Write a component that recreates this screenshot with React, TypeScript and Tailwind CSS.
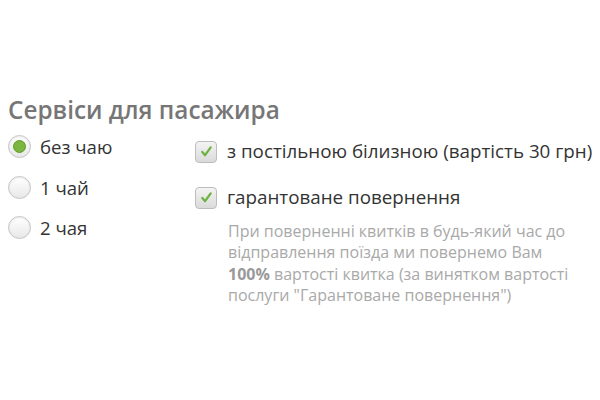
// Passenger services block - tea choice radios and extra service checkboxes

const teaOptions = [
  { id: 'none', label: 'без чаю', checked: true },
  { id: 'one', label: '1 чай', checked: false },
  { id: 'two', label: '2 чая', checked: false },
];

function Radio({ checked }: { checked: boolean }) {
  return (
    <span className="flex h-[23px] w-[23px] shrink-0 items-center justify-center rounded-full border border-[#c4c4c4] bg-gradient-to-b from-[#ffffff] to-[#e8e8e8] shadow-[inset_0_1px_2px_rgba(0,0,0,0.08)]">
      {checked && (
        <span className="h-[13px] w-[13px] rounded-full border border-[#5f9a2a] bg-[#7ab640]" />
      )}
    </span>
  );
}

function Checkbox() {
  return (
    <span className="flex h-[22px] w-[22px] shrink-0 items-center justify-center rounded-[4px] border border-[#bdbdbd] bg-gradient-to-b from-[#f4f4f4] to-[#dadada]">
      <svg width="13" height="13" viewBox="0 0 14 14" fill="none">
        <path d="M2.5 7.5 L5.5 11 L11.5 2.5" stroke="#6cb33f" strokeWidth="2.4" strokeLinecap="round" strokeLinejoin="round" />
      </svg>
    </span>
  );
}

export default function App() {
  return (
    <div className="h-[400px] w-[600px] bg-white pt-[94px] pl-[8px] font-['Open_Sans',sans-serif]">
      <h2 className="text-[24.3px] font-semibold leading-[32px] text-[#767676]">Сервіси для пасажира</h2>

      <div className="mt-[9px] flex">
        <div className="flex w-[187px] flex-col gap-[17.5px]">
          {teaOptions.map((o) => (
            <label key={o.id} className="flex items-center gap-[9px] text-[18.6px] leading-[23px] text-[#333]">
              <Radio checked={o.checked} />
              <span>{o.label}</span>
            </label>
          ))}
        </div>

        <div className="flex flex-col pt-[5px]">
          <label className="flex items-center gap-[10px] text-[18.8px] leading-[23px] whitespace-nowrap text-[#333]">
            <Checkbox />
            <span>з постільною білизною (вартість 30 грн)</span>
          </label>

          <label className="mt-[23px] flex items-center gap-[10px] text-[18.8px] leading-[23px] text-[#333]">
            <Checkbox />
            <span>гарантоване повернення</span>
          </label>

          <p className="mt-[12px] ml-[33px] w-[360px] text-[16px] leading-[21.3px] text-[#a9a9a9]">
            При поверненні квитків в будь-який час до
            <br />
            відправлення поїзда ми повернемо Вам
            <br />
            <b className="font-bold text-[#999]">100%</b> вартості квитка (за винятком вартості
            <br />
            послуги "Гарантоване повернення")
          </p>
        </div>
      </div>
    </div>
  );
}
